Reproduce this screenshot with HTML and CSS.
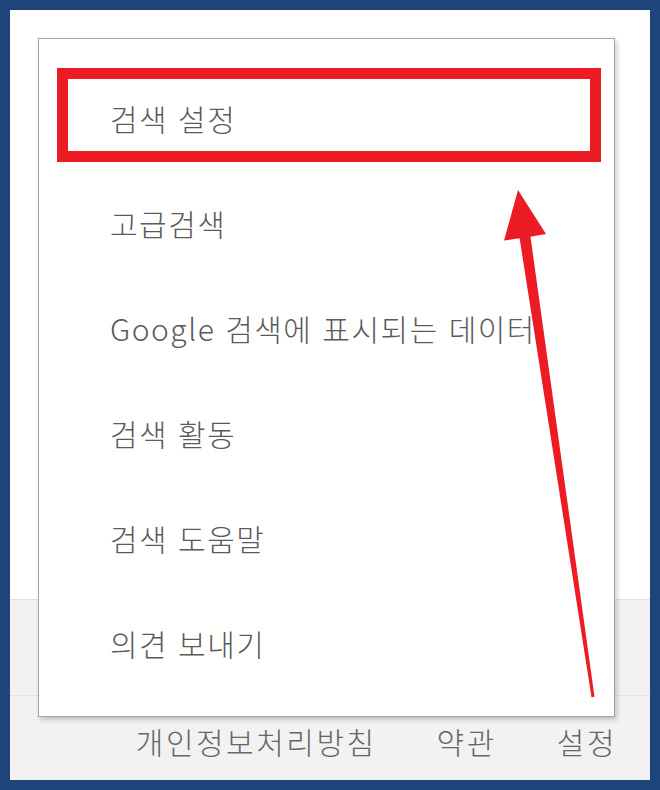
FILE: index.html
```html
<!DOCTYPE html>
<html lang="ko">
<head>
    <meta charset="UTF-8">
    <meta name="viewport" content="width=device-width, initial-scale=1.0">
    <title>검색 설정</title>
    <link rel="stylesheet" href="styles.css">
</head>
<body>
    <div class="frame">
        <div class="page">
            <div class="content"></div>
            <footer class="footer">
                <div class="footer-band"></div>
                <div class="footer-links">
                    <a href="#">개인정보처리방침</a>
                    <a href="#">약관</a>
                    <a href="#">설정</a>
                </div>
            </footer>

            <!-- 설정 메뉴 -->
            <div class="menu">
                <ul class="menu-list">
                    <li class="menu-item"><span>검색 설정</span></li>
                    <li class="menu-item"><span>고급검색</span></li>
                    <li class="menu-item"><span>Google 검색에 표시되는 데이터</span></li>
                    <li class="menu-item"><span>검색 활동</span></li>
                    <li class="menu-item"><span>검색 도움말</span></li>
                    <li class="menu-item"><span>의견 보내기</span></li>
                </ul>
            </div>

            <!-- 표시 -->
            <div class="highlight"></div>
            <svg class="arrow" viewBox="10 10 640 770" width="640" height="770">
                <polygon fill="#ed1c24" points="518,190 546,234 530.5,236.8 594.5,696.8 591.5,697.2 519.6,238.3 504,240.6"/>
            </svg>
        </div>
    </div>
</body>
</html>
```

FILE: styles.css
```css
body {
    margin: 0;
    padding: 0;
    font-family: 'Noto Sans CJK KR', 'Noto Sans', sans-serif;
}

.frame {
    width: 660px;
    height: 790px;
    box-sizing: border-box;
    border: 10px solid #1f4479;
    background-color: white;
}

.page {
    position: relative;
    width: 640px;
    height: 770px;
    display: flex;
    flex-direction: column;
}

.content {
    height: 589px;
}

.footer {
    flex-grow: 1;
    background-color: #f2f2f2;
    border-top: 1px solid #e2e2e2;
    display: flex;
    flex-direction: column;
}

.footer-band {
    height: 95px;
    border-bottom: 1px solid #e2e2e2;
}

.footer-links {
    flex-grow: 1;
    display: flex;
    justify-content: flex-end;
    align-items: center;
    gap: 60px;
    padding: 6px 33px 0 0;
}

.footer-links a {
    color: #666;
    font-size: 30px;
    font-weight: 300;
    letter-spacing: 2.5px;
    text-decoration: none;
}

.menu {
    position: absolute;
    left: 28px;
    top: 28px;
    width: 577px;
    height: 679px;
    box-sizing: border-box;
    background-color: white;
    border: 1px solid #a3a3a3;
    box-shadow: 2px 3px 5px rgba(0, 0, 0, 0.2);
}

.menu-list {
    list-style: none;
    margin: 0;
    padding: 27px 0 0 0;
}

.menu-item {
    height: 105px;
    line-height: 105px;
    padding: 0 75px 0 71px;
    font-size: 30px;
    font-weight: 300;
    letter-spacing: 1.5px;
    color: #5a5a5a;
}

.menu-item span {
    display: block;
    white-space: nowrap;
    overflow: hidden;
}

.highlight {
    position: absolute;
    left: 47px;
    top: 58px;
    width: 544px;
    height: 94px;
    box-sizing: border-box;
    border: 11px solid #ed1c24;
}

.arrow {
    position: absolute;
    left: 0;
    top: 0;
    pointer-events: none;
}
```
